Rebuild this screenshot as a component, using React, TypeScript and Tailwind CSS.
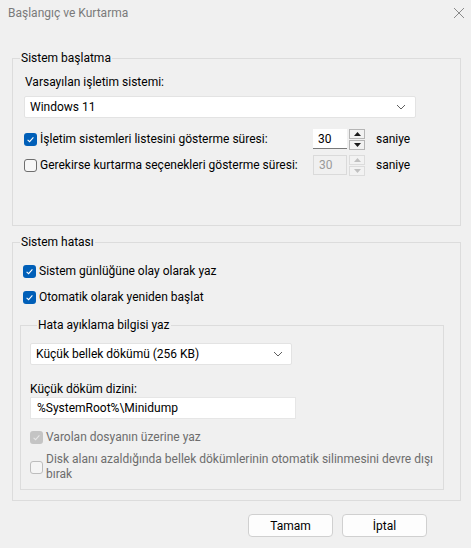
import React from "react";

const font = { fontFamily: 'Roboto, "Noto Sans", sans-serif' };

function Check({ checked, disabled }: { checked?: boolean; disabled?: boolean }) {
  if (checked) {
    return (
      <span
        className={`flex h-[13px] w-[13px] shrink-0 items-center justify-center rounded-[3px] ${
          disabled ? "bg-[#c4c4c4]" : "bg-[#005fb8]"
        }`}
      >
        <svg width="9" height="9" viewBox="0 0 9 9" fill="none">
          <path d="M1.6 4.8 L3.6 6.7 L7.4 2.4" stroke={disabled ? "#e6e6e6" : "#ffffff"} strokeWidth="1.1" />
        </svg>
      </span>
    );
  }
  return (
    <span
      className={`h-[13px] w-[13px] shrink-0 rounded-[3px] border ${
        disabled ? "border-[#bdbdbd] bg-[#f5f5f5]" : "border-[#6e6e6e] bg-[#f7f7f7]"
      }`}
    />
  );
}

function Chevron() {
  return (
    <svg width="10" height="6" viewBox="0 0 10 6" fill="none">
      <path d="M1 1 L5 5 L9 1" stroke="#5f5f5f" strokeWidth="1" />
    </svg>
  );
}

function Spinner({ disabled }: { disabled?: boolean }) {
  const arrow = disabled ? "#c0c0c0" : "#1a1a1a";
  const box = disabled ? "border-[#dcdcdc]" : "border-[#b5b5b5]";
  return (
    <div className="flex items-center">
      <div
        className={`flex h-[20px] w-[34px] items-center pl-[5px] ${
          disabled
            ? "border border-[#dadada] bg-[#f0f0f0] text-[#9a9a9a]"
            : "border-b border-b-[#7a7a7a] bg-white text-black"
        }`}
      >
        30
      </div>
      <div className="ml-[2px] flex w-[16px] flex-col gap-[1px]">
        <div className={`flex h-[10px] items-center justify-center border bg-[#f2f2f2] ${box}`}>
          <svg width="7" height="4" viewBox="0 0 7 4">
            <path d="M0 4 L3.5 0 L7 4 Z" fill={arrow} />
          </svg>
        </div>
        <div className={`flex h-[10px] items-center justify-center border bg-[#f2f2f2] ${box}`}>
          <svg width="7" height="4" viewBox="0 0 7 4">
            <path d="M0 0 L3.5 4 L7 0 Z" fill={arrow} />
          </svg>
        </div>
      </div>
      <span className="ml-[11px] text-black">saniye</span>
    </div>
  );
}

export default function App() {
  return (
    <div className="h-[548px] w-[471px] bg-[#f0f0f0] text-[12px] leading-[16px] text-black" style={font}>
      {/* Title bar */}
      <div className="flex h-[25px] items-center justify-between pl-[8px] pr-[6px]">
        <span className="text-[#7a7a7a]">Başlangıç ve Kurtarma</span>
        <svg width="12" height="12" viewBox="0 0 12 12" fill="none">
          <path d="M1 1 L11 11 M11 1 L1 11" stroke="#8a8a8a" strokeWidth="1" />
        </svg>
      </div>

      <div className="pl-[12px] pr-[10px] pt-[25px]">
        {/* Sistem başlatma */}
        <fieldset className="border border-[#dcdcdc] pb-[50px] pl-[11px] pr-[44px]">
          <legend className="-ml-[4px] px-[1px]">Sistem başlatma</legend>
          <div className="mt-[8px] pl-[1px]">Varsayılan işletim sistemi:</div>
          <div className="mt-[6px] flex h-[22px] items-center justify-between rounded-[2px] border border-[#e3e3e3] bg-white pl-[5px] pr-[9px]">
            <span>Windows 11</span>
            <Chevron />
          </div>
          <div className="mt-[11px] flex h-[20px] items-center">
            <div className="flex w-[289px] items-center gap-[3px] whitespace-nowrap">
              <Check checked />
              <span>İşletim sistemleri listesini gösterme süresi:</span>
            </div>
            <Spinner />
          </div>
          <div className="mt-[6px] flex h-[20px] items-center">
            <div className="flex w-[289px] items-center gap-[3px] whitespace-nowrap">
              <Check />
              <span>Gerekirse kurtarma seçenekleri gösterme süresi:</span>
            </div>
            <Spinner disabled />
          </div>
        </fieldset>

        {/* Sistem hatası */}
        <fieldset className="mt-[8px] border border-[#dcdcdc] pb-[10px] pl-[7px] pr-[16px]">
          <legend className="ml-0 px-[1px]">Sistem hatası</legend>
          <div className="ml-[3px] mt-[13px] flex items-center gap-[3px]">
            <Check checked />
            <span>Sistem günlüğüne olay olarak yaz</span>
          </div>
          <div className="ml-[3px] mt-[10px] flex items-center gap-[3px]">
            <Check checked />
            <span>Otomatik olarak yeniden başlat</span>
          </div>

          <fieldset className="mt-[12px] border border-[#dcdcdc] pb-[7px] pl-[9px] pr-[4px]">
            <legend className="ml-[7px] px-[1px]">Hata ayıklama bilgisi yaz</legend>
            <div className="mt-[10px] flex h-[22px] w-[262px] items-center justify-between rounded-[2px] border border-[#e3e3e3] bg-white pl-[5px] pr-[8px]">
              <span>Küçük bellek dökümü (256 KB)</span>
              <Chevron />
            </div>
            <div className="mt-[16px]">Küçük döküm dizini:</div>
            <div className="flex h-[22px] w-[266px] items-center border border-[#e6e6e6] bg-white pl-[6px]">
              %SystemRoot%\Minidump
            </div>
            <div className="mt-[10px] flex items-center gap-[3px] text-[#6d6d6d]">
              <Check checked disabled />
              <span>Varolan dosyanın üzerine yaz</span>
            </div>
            <div className="mt-[7px] flex items-center gap-[3px] text-[#6d6d6d]">
              <Check disabled />
              <span className="max-w-[392px] leading-[15px]">
                Disk alanı azaldığında bellek dökümlerinin otomatik silinmesini devre dışı bırak
              </span>
            </div>
          </fieldset>
        </fieldset>

        {/* Buttons */}
        <div className="mt-[13px] flex justify-end gap-[9px] pr-[34px]">
          <button className="h-[23px] w-[85px] rounded-[4px] border border-[#d0d0d0] bg-[#fdfdfd] text-black">
            Tamam
          </button>
          <button className="h-[23px] w-[85px] rounded-[4px] border border-[#d0d0d0] bg-[#fdfdfd] text-black">
            İptal
          </button>
        </div>
      </div>
    </div>
  );
}
